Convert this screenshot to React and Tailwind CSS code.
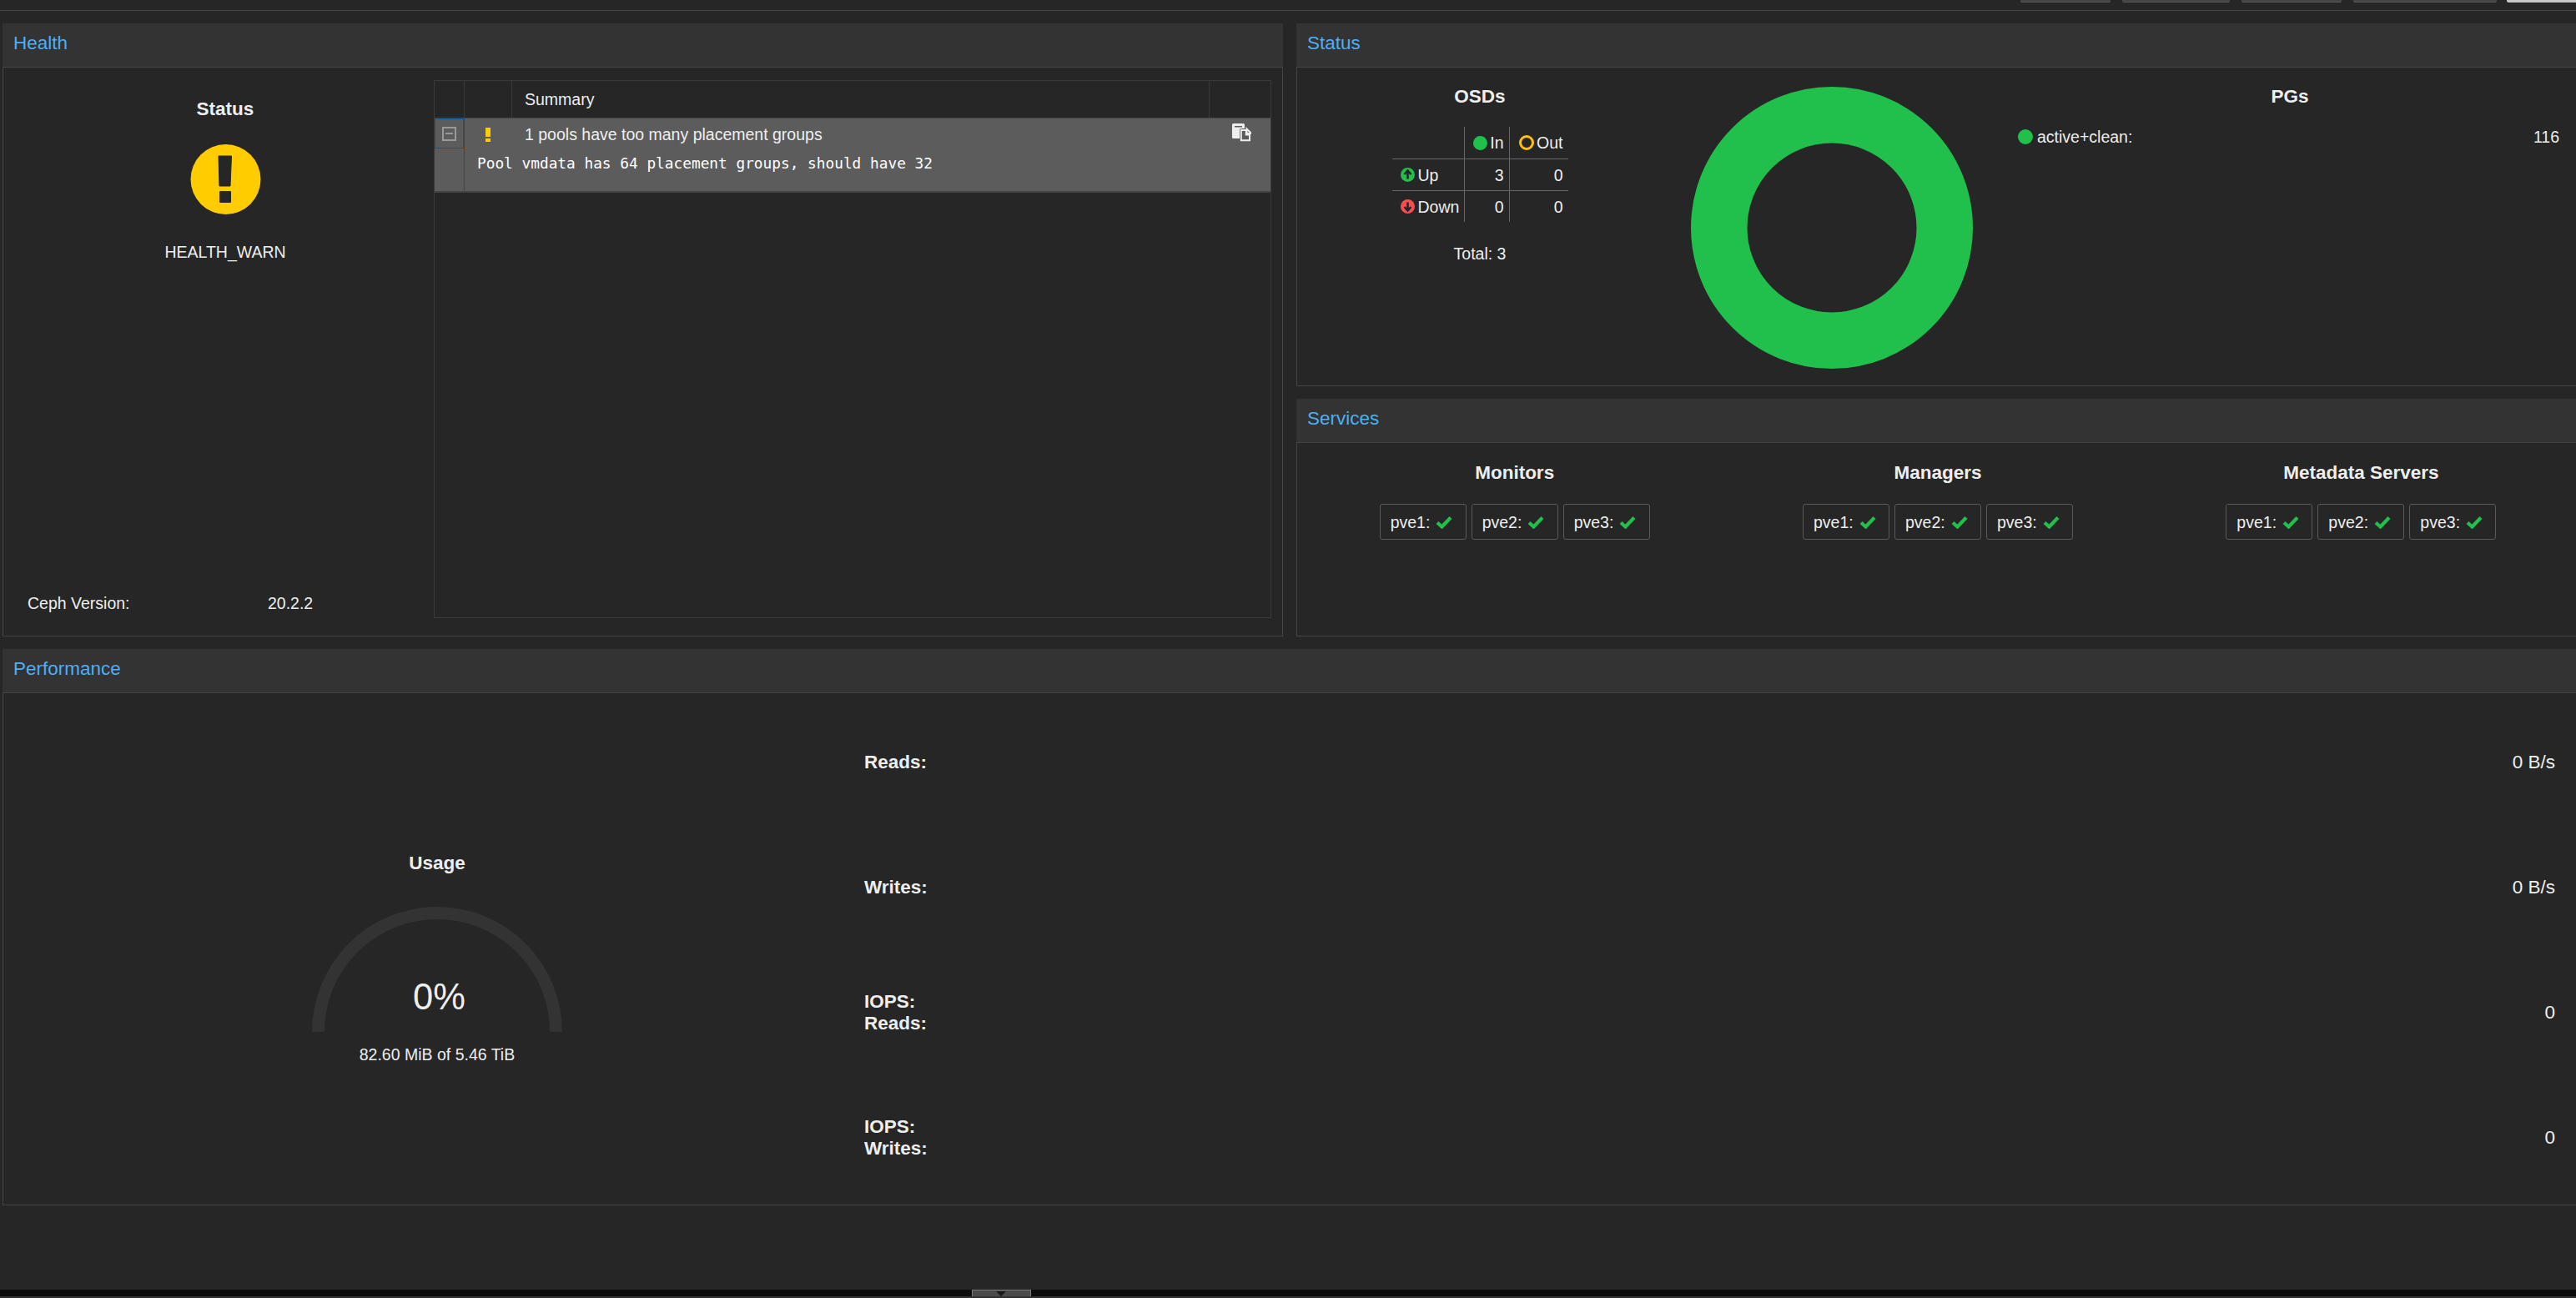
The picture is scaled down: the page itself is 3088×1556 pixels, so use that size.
import React from 'react';

const hosts = ['pve1', 'pve2', 'pve3'];
const services = ['Monitors', 'Managers', 'Metadata Servers'];

function Panel({ title, className, bodyClassName, children }) {
  return (
    <div className={`flex flex-col ${className}`}>
      <div className="h-[53px] shrink-0 bg-[#333333] border-b border-[#444444] pl-[13px] pb-[3px] flex items-center text-[#4eaef5] text-[22.5px] leading-none">
        {title}
      </div>
      <div className={`flex-1 min-h-0 border-l border-b border-[#444444] ${bodyClassName}`}>{children}</div>
    </div>
  );
}

function WarnIcon() {
  return (
    <svg width="85" height="84" viewBox="0 0 85 84">
      <circle cx="42.5" cy="42" r="42" fill="#ffcc00" />
      <path d="M34 14h15.5l-1.5 36h-13z" fill="#262626" stroke="#262626" strokeLinejoin="round" />
      <rect x="35" y="56" width="14" height="14" rx="1" fill="#262626" />
    </svg>
  );
}

function PasteIcon() {
  return (
    <svg width="23" height="22" viewBox="0 0 23 22">
      <path d="M0 1.5A1.5 1.5 0 0 1 1.5 0h12A1.5 1.5 0 0 1 15 1.5V6h-2a3 3 0 0 0-3 3v9H1.5A1.5 1.5 0 0 1 0 16.500z" fill="#eeeeee" />
      <rect x="3" y="3" width="9" height="1.500" fill="#5c5c5c" />
      <path d="M9 6.500h6.500v5.500h6.500v9.500H9z" fill="#5c5c5c" />
      <path d="M10.800 8h6v5.500h4.200v6.800h-10.200zM17.500 6.500l5.500 5.500h-5.500z" fill="none" stroke="#eeeeee" strokeWidth="2" />
    </svg>
  );
}

function ArrowCircle({ color, down }) {
  return (
    <svg width="17" height="17" viewBox="0 0 17 17" className="shrink-0">
      <circle cx="8.5" cy="8.500" r="8.500" fill={color} />
      <path
        d={down ? 'M8.500 3.500v10M4.500 9l4 4.500 4-4.500' : 'M8.500 13.500v-10M4.500 8l4-4.500 4 4.500'}
        fill="none"
        stroke="#262626"
        strokeWidth="2.600"
      />
    </svg>
  );
}

function Check() {
  return (
    <svg width="20" height="16" viewBox="0 0 20 16" className="shrink-0">
      <path d="M2 8.500l5.500 5L18 2.500" fill="none" stroke="#21bf4b" strokeWidth="4.200" />
    </svg>
  );
}

function Chip({ host }) {
  return (
    <div className="w-[104px] h-[43px] border border-[#5a5a5a] rounded-[3px] flex items-center pl-[12px] gap-[7px]">
      <span>{host}:</span>
      <Check />
    </div>
  );
}

function MetricRow({ label, value }) {
  return (
    <div className="flex items-center justify-between">
      <div className="font-bold text-[22.5px] leading-[26px] w-[90px]">{label}</div>
      <div className="text-[22.5px]">{value}</div>
    </div>
  );
}

function OsdCell({ className, children }) {
  return <div className={`flex items-center justify-end pr-[6px] h-[38px] border-[#666666] ${className}`}>{children}</div>;
}

export default function App() {
  return (
    <div className="w-full h-[1556px] overflow-hidden flex flex-col bg-[#262626] text-[#eeeeee] text-[19.5px] leading-[24px] font-['Liberation_Sans',Arial,sans-serif]">
      <div className="h-[13px] shrink-0 border-b border-[#444444] flex items-start justify-end gap-[14px]">
        <div className="w-[108px] h-[3px] bg-[#444444] rounded-b-[2px] border-b border-[#5a5a5a]" />
        <div className="w-[129px] h-[3px] bg-[#444444] rounded-b-[2px] border-b border-[#5a5a5a]" />
        <div className="w-[120px] h-[3px] bg-[#444444] rounded-b-[2px] border-b border-[#5a5a5a]" />
        <div className="w-[172px] h-[3px] bg-[#444444] rounded-b-[2px] border-b border-[#5a5a5a]" />
        <div className="w-[83px] h-[3px] bg-[#c8c8c8] rounded-bl-[2px] -ml-[2px]" />
      </div>

      <div className="flex-1 min-h-0 pl-[3px] pt-[15px] flex flex-col gap-[15px]">
        <div className="h-[735px] shrink-0 flex gap-[16px]">
          <Panel title="Health" className="w-[1535px] shrink-0" bodyClassName="border-r flex">
            <div className="w-[516px] shrink-0 pl-[16px] flex flex-col items-center">
              <div className="mt-[37px] font-bold text-[22.500px] leading-[26px]">Status</div>
              <div className="mt-[29px]"><WarnIcon /></div>
              <div className="mt-[33px]">HEALTH_WARN</div>
              <div className="mt-auto mb-[27px] -ml-[16px] self-stretch flex pl-[29px]">
                <span className="w-[288px]">Ceph Version:</span>
                <span>20.2.2</span>
              </div>
            </div>
            <div className="w-[1004px] shrink-0 mt-[15px] mb-[21px] border border-[#3a3a3a] flex flex-col">
              <div className="h-[45px] shrink-0 flex border-b border-[#444444]">
                <div className="w-[36px] border-r border-[#3a3a3a]" />
                <div className="w-[57px] border-r border-[#3a3a3a]" />
                <div className="flex-1 border-r border-[#3a3a3a] pl-[15px] flex items-center">Summary</div>
                <div className="w-[73px]" />
              </div>
              <div className="h-[89px] shrink-0 bg-[#5c5c5c] border-b-2 border-[#444444] flex relative">
                <div className="w-[36px] shrink-0 border-r border-[#444444]">
                  <div className="h-[36px] border border-[#0a5a96] flex items-center justify-center">
                    <div className="w-[17px] h-[17px] border-2 border-[#999999] flex items-center justify-center">
                      <div className="w-[9px] h-[2px] bg-[#999999]" />
                    </div>
                  </div>
                </div>
                <div className="flex-1 min-w-0">
                  <div className="h-[38px] flex items-center">
                    <div className="w-[57px] flex flex-col items-center gap-[2px] pr-[2px]">
                      <div className="w-[6px] h-[11px] bg-[#ffcc00]" />
                      <div className="w-[6px] h-[4px] bg-[#ffcc00]" />
                    </div>
                    <div className="pl-[15px]">1 pools have too many placement groups</div>
                  </div>
                  <div className="pl-[15px] font-['DejaVu_Sans_Mono',monospace] text-[17.800px] leading-[24px] text-white mt-[4px]">
                    Pool vmdata has 64 placement groups, should have 32
                  </div>
                </div>
                <div className="absolute right-[23px] top-[6px]"><PasteIcon /></div>
              </div>
            </div>
          </Panel>

          <div className="flex-1 min-w-0 flex flex-col gap-[15px] -mr-[8px]">
            <Panel title="Status" className="h-[435px] shrink-0" bodyClassName="flex">
              <div className="w-[437px] shrink-0 flex flex-col items-center pl-[1px]">
                <div className="mt-[22px] font-bold text-[22.500px] leading-[26px]">OSDs</div>
                <div className="mt-[23px] w-[211px] grid grid-cols-[87px_54px_70px]">
                  <OsdCell className="border-r" />
                  <OsdCell className="border-r gap-[3px]">
                    <span className="w-[17px] h-[17px] rounded-full bg-[#21bf4b]" />
                    In
                  </OsdCell>
                  <OsdCell className="gap-[3px]">
                    <span className="w-[18px] h-[18px] rounded-full border-[3px] border-[#ffc107]" />
                    Out
                  </OsdCell>
                  <OsdCell className="border-t border-r !justify-start pl-[10px] gap-[4px]">
                    <ArrowCircle color="#21bf4b" />
                    Up
                  </OsdCell>
                  <OsdCell className="border-t border-r">3</OsdCell>
                  <OsdCell className="border-t">0</OsdCell>
                  <OsdCell className="border-t border-r !justify-start pl-[10px] gap-[4px]">
                    <ArrowCircle color="#ff4d4d" down />
                    Down
                  </OsdCell>
                  <OsdCell className="border-t border-r">0</OsdCell>
                  <OsdCell className="border-t">0</OsdCell>
                </div>
                <div className="mt-[26px]">Total: 3</div>
              </div>
              <div className="pt-[23px] pl-[35px] shrink-0">
                <svg width="338" height="338" viewBox="0 0 338 338">
                  <circle cx="169" cy="169" r="135.250" fill="none" stroke="#21bf4b" strokeWidth="67.500" />
                </svg>
              </div>
              <div className="flex-1 min-w-0 flex flex-col pl-[54px] pr-[28px]">
                <div className="mt-[22px] font-bold text-[22.500px] leading-[26px] text-center pl-[3px]">PGs</div>
                <div className="mt-[23px] flex items-center">
                  <span className="w-[18px] h-[18px] rounded-full bg-[#21bf4b] mr-[5px]" />
                  <span className="flex-1">active+clean:</span>
                  <span>116</span>
                </div>
              </div>
            </Panel>

            <Panel title="Services" className="flex-1 min-h-0" bodyClassName="grid grid-cols-3 pl-[7px] pr-[12px] content-start">
              {services.map((name) => (
                <div key={name} className="flex flex-col items-center">
                  <div className="mt-[23px] font-bold text-[22.500px] leading-[26px]">{name}</div>
                  <div className="mt-[24px] flex gap-[6px]">
                    {hosts.map((h) => <Chip key={h} host={h} />)}
                  </div>
                </div>
              ))}
            </Panel>
          </div>
        </div>

        <Panel title="Performance" className="h-[667px] shrink-0 -mr-[8px]" bodyClassName="flex">
          <div className="w-[1032px] shrink-0 flex flex-col items-center pl-[8px]">
            <div className="mt-[191px] font-bold text-[22.500px] leading-[26px]">Usage</div>
            <div className="mt-[39px] relative w-[300px] h-[150px]">
              <svg width="300" height="150" viewBox="0 0 300 150">
                <path d="M7.500 150a142.500 142.500 0 0 1 285 0" fill="none" stroke="#333333" strokeWidth="15" />
              </svg>
              <div className="absolute left-[5px] right-0 top-[86px] text-center text-[43.500px] leading-[44px]">0%</div>
            </div>
            <div className="mt-[15px]">82.60 MiB of 5.46 TiB</div>
          </div>
          <div className="flex-1 min-w-0 grid grid-rows-[repeat(4,150px)] items-center content-start pt-[8px] pr-[33px]">
            <MetricRow label="Reads:" value="0 B/s" />
            <MetricRow label="Writes:" value="0 B/s" />
            <MetricRow label={<>IOPS:<br />Reads:</>} value="0" />
            <MetricRow label={<>IOPS:<br />Writes:</>} value="0" />
          </div>
        </Panel>
      </div>

      <div className="h-[10px] shrink-0 flex flex-col">
        <div className="h-[8px] bg-[#0d0d0d] flex justify-center pr-[688px] pl-0">
          <div className="w-[71px] h-[8px] bg-[#4a4a4a] border-t border-[#7a7a7a] border-x flex justify-center items-end">
            <div className="w-0 h-0 border-x-[6px] border-x-transparent border-t-[6px] border-t-[#1a1a1a]" />
          </div>
        </div>
        <div className="flex-1 bg-[#333333]" />
      </div>
    </div>
  );
}
